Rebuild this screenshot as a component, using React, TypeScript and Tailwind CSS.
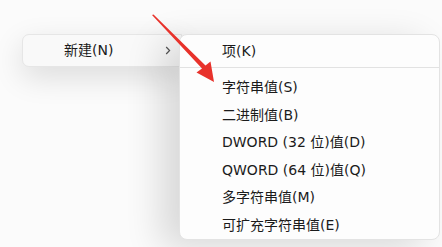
const font = "font-['DejaVu_Sans','Noto_Sans_CJK_SC',sans-serif]";

const items = [
  "字符串值(S)",
  "二进制值(B)",
  "DWORD (32 位)值(D)",
  "QWORD (64 位)值(Q)",
  "多字符串值(M)",
  "可扩充字符串值(E)",
];

const Chevron = () => (
  <svg width="6" height="9" viewBox="0 0 6 9" className="text-[#555]">
    <path d="M1.2 1 L4.6 4.5 L1.2 8" fill="none" stroke="currentColor" strokeWidth="1.2" />
  </svg>
);

const Arrow = () => (
  <svg
    width="442"
    height="247"
    viewBox="0 0 442 247"
    className="absolute left-0 top-0 z-20 pointer-events-none"
  >
    <polygon
      points="152,15 153.5,14.5 205.5,65.5 210.5,61.5 214,82 196.5,72.5 202,68.5"
      fill="#e8322b"
    />
  </svg>
);

export default function App() {
  return (
    <div
      className={`relative w-[442px] h-[247px] overflow-hidden bg-[#fbfbfb] text-[14px] text-[#1b1b1b] ${font}`}
    >
      <div className="flex items-start pt-[34px] pl-[22px]">
        <div className="w-[160px] h-[33px] rounded-l-[7px] bg-[#f9f9f9] border border-[#e6e6e6] shadow-[0_10px_30px_rgba(0,0,0,0.13)] flex items-center pl-[41px] pr-[10px]">
          <span className="flex-1">新建(N)</span>
          <Chevron />
        </div>
        <div className="-ml-[3px] z-10 w-[261px] h-[206px] rounded-[8px] bg-[#fdfdfd] border border-[#e3e3e3] shadow-[-18px_8px_36px_rgba(0,0,0,0.14)] flex flex-col">
          <div className="h-[33px] flex items-center pl-[42px]">项(K)</div>
          <div className="h-px bg-[#e2e2e2]" />
          <div className="flex flex-col pt-[6px]">
            {items.map((t) => (
              <div key={t} className="h-[27.5px] flex items-center pl-[42px]">
                {t}
              </div>
            ))}
          </div>
        </div>
      </div>
      <Arrow />
    </div>
  );
}
